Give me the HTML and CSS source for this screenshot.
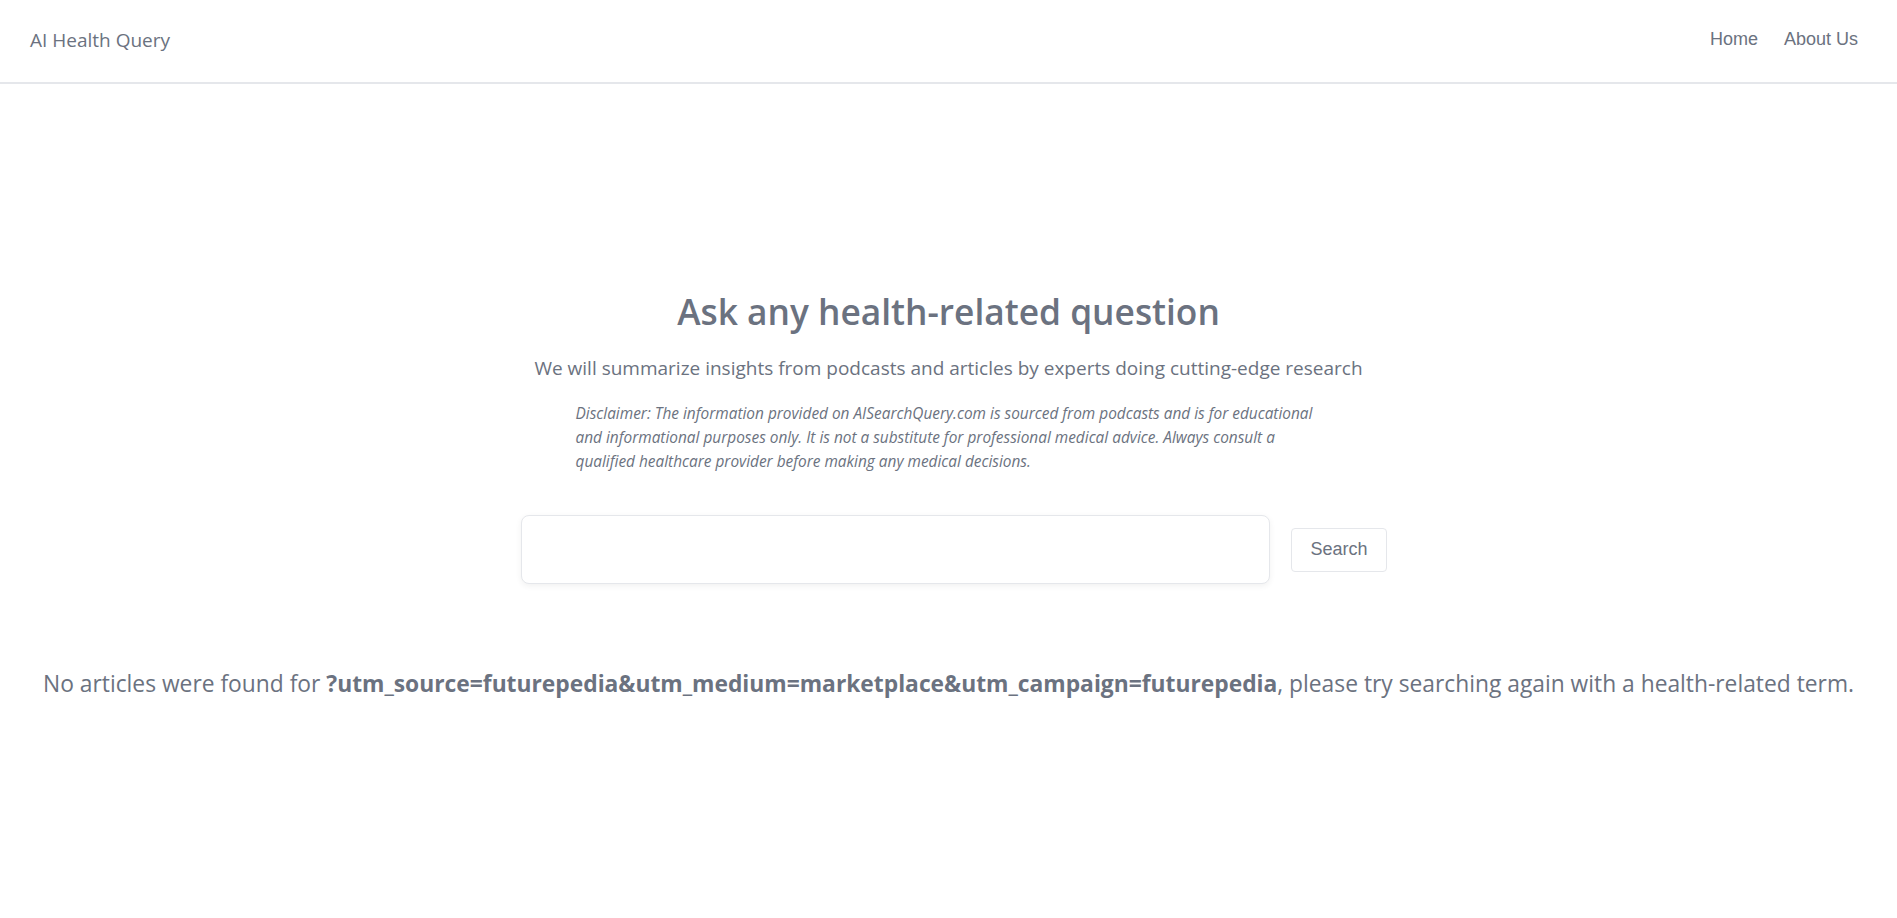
FILE: index.html
```html
<!DOCTYPE html>
<html lang="en">
<head>
<meta charset="utf-8">
<title>AI Health Query</title>
<link rel="stylesheet" href="styles.css">
</head>
<body>
<header class="topbar">
  <a class="brand" href="#">AI Health Query</a>
  <nav class="nav">
    <a class="nav-link" href="#">Home</a>
    <a class="nav-link" href="#">About Us</a>
  </nav>
</header>
<main class="main">
  <section class="hero">
    <h1 class="title">Ask any health-related question</h1>
    <p class="subtitle">We will summarize insights from podcasts and articles by experts doing cutting-edge research</p>
    <p class="disclaimer">Disclaimer: The information provided on AISearchQuery.com is sourced from podcasts and is for educational and informational purposes only. It is not a substitute for professional medical advice. Always consult a qualified healthcare provider before making any medical decisions.</p>
    <form class="search">
      <input class="search-input" type="text" aria-label="Search">
      <button class="search-btn" type="button">Search</button>
    </form>
  </section>
  <p class="results">No articles were found for <strong class="query">?utm_source=futurepedia&amp;utm_medium=marketplace&amp;utm_campaign=futurepedia</strong>, please try searching again with a health-related term.</p>
</main>
</body>
</html>
```

FILE: styles.css
```css
* { box-sizing: border-box; }
html, body { margin: 0; padding: 0; background: #ffffff; }
body {
  font-family: "Open Sans", "Noto Sans", sans-serif;
  color: #6b7280;
}
.topbar {
  height: 84px;
  border-bottom: 2px solid #e5e7eb;
  display: flex;
  align-items: center;
  justify-content: space-between;
  padding: 0 39px 4px 30px;
}
.brand {
  font-size: 19px;
  color: #6b7280;
  text-decoration: none;
  padding-top: 1px;
}
.nav {
  display: flex;
  gap: 26px;
}
.nav-link {
  font-family: "Liberation Sans", Arial, sans-serif;
  font-size: 18px;
  color: #6b7280;
  text-decoration: none;
}
.main {
  padding-top: 207px;
}
.hero {
  display: flex;
  flex-direction: column;
  align-items: center;
}
.title {
  margin: 0;
  font-size: 35.3px;
  line-height: 40px;
  font-weight: 600;
  color: #6b7280;
}
.subtitle {
  margin: 23px 0 0;
  font-size: 19px;
  line-height: 28px;
}
.disclaimer {
  margin: 20px 0 0 14px;
  width: 760px;
  font-size: 15.4px;
  line-height: 24px;
  font-style: italic;
}
.search {
  margin: 41px 0 0;
  padding-left: 11px;
  display: flex;
  align-items: center;
  gap: 21px;
}
.search-input {
  width: 749px;
  height: 69px;
  border: 1px solid #e5e7eb;
  border-radius: 8px;
  box-shadow: 0 2px 6px rgba(0, 0, 0, 0.06);
  background: #fff;
  outline: none;
  font-size: 18px;
  padding: 0 16px;
}
.search-btn {
  width: 96px;
  height: 44px;
  border: 1px solid #e5e7eb;
  border-radius: 4px;
  background: #fff;
  color: #6b7280;
  font-family: "Liberation Sans", Arial, sans-serif;
  font-size: 18px;
  padding: 0;
}
.results {
  margin: 84px 0 0;
  text-align: center;
  font-size: 22.8px;
  line-height: 32px;
}
.query {
  font-weight: 700;
}
```
